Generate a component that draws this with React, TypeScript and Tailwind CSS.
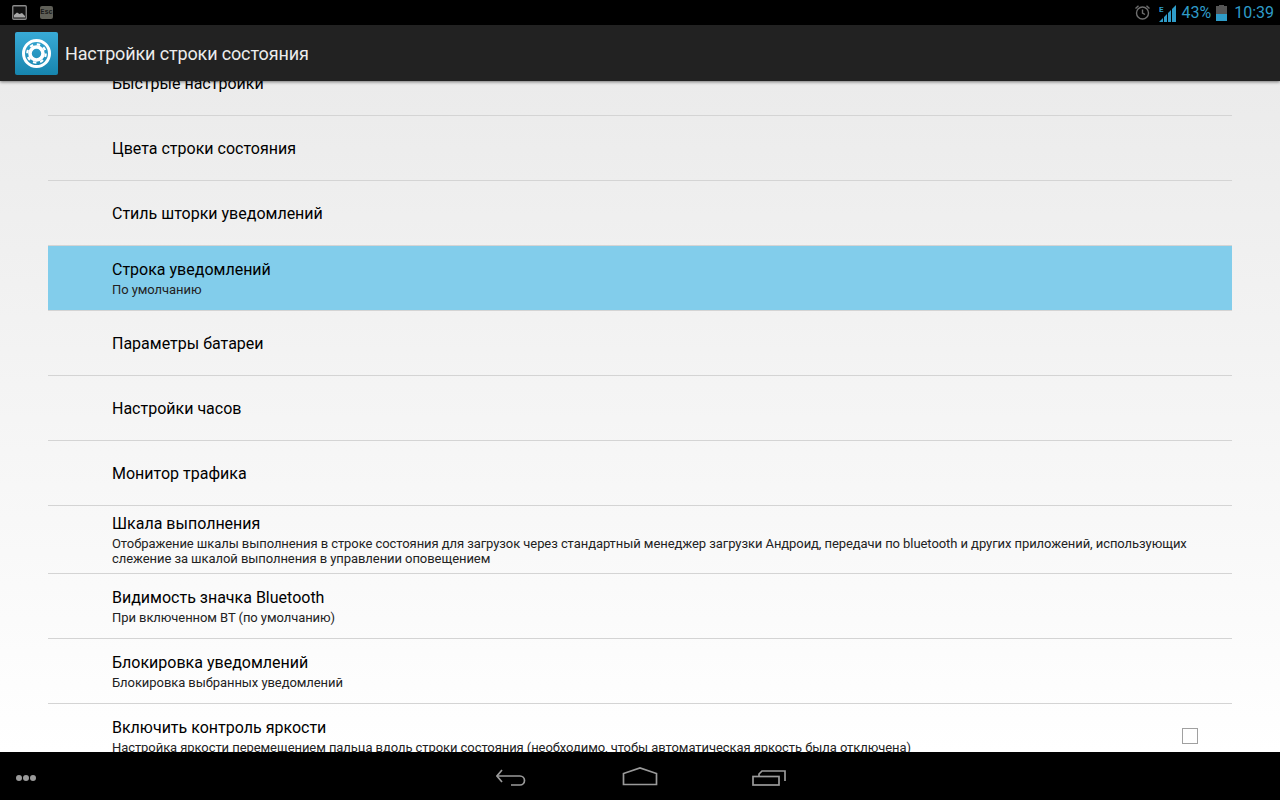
import React from "react";

type Row = {
  title: string;
  desc?: React.ReactNode;
  active?: boolean;
  checkbox?: boolean;
};

const rows: Row[] = [
  { title: "Быстрые настройки" },
  { title: "Цвета строки состояния" },
  { title: "Стиль шторки уведомлений" },
  { title: "Строка уведомлений", desc: "По умолчанию", active: true },
  { title: "Параметры батареи" },
  { title: "Настройки часов" },
  { title: "Монитор трафика" },
  {
    title: "Шкала выполнения",
    desc: "Отображение шкалы выполнения в строке состояния для загрузок через стандартный менеджер загрузки Андроид, передачи по bluetooth и других приложений, использующих слежение за шкалой выполнения в управлении оповещением",
  },
  { title: "Видимость значка Bluetooth", desc: "При включенном ВТ (по умолчанию)" },
  { title: "Блокировка уведомлений", desc: "Блокировка выбранных уведомлений" },
  {
    title: "Включить контроль яркости",
    desc: "Настройка яркости перемещением пальца вдоль строки состояния (необходимо, чтобы автоматическая яркость была отключена)",
    checkbox: true,
  },
];

const GearLogo = () => (
  <div className="w-[43px] h-[43px] rounded-[2px] bg-gradient-to-b from-[#38aad6] to-[#1685ae] flex items-center justify-center">
    <svg width="31" height="31" viewBox="0 0 31 31" fill="none">
      <circle cx="15.5" cy="15.5" r="13" stroke="white" strokeWidth="3" />
      <circle cx="15.5" cy="15.5" r="6.5" stroke="white" strokeWidth="3.6" />
      <circle cx="15.5" cy="15.5" r="9.2" stroke="white" strokeWidth="2.2" strokeDasharray="3.4 3.83" />
    </svg>
  </div>
);

const StatusBar = () => (
  <div className="h-[25px] bg-black flex items-center justify-between shrink-0">
    <div className="flex items-center gap-[13px] pl-[12px]">
      <svg width="15" height="15" viewBox="0 0 15 15" fill="none">
        <rect x="0.75" y="0.75" width="13.5" height="13.5" rx="1" fill="#111" stroke="#8b8b8b" strokeWidth="1.3" />
        <path d="M2 12.5 L2 10 L5 7.5 L7.5 9 L10 8 L13 11 L13 12.5 Z" fill="#a8a8a8" />
      </svg>
      <div className="w-[13px] h-[13px] rounded-[2px] bg-[#5f5f57] flex items-center justify-center text-[7px] font-bold leading-none text-[#1a1a1a] font-['Liberation_Mono',monospace]">
        Esc
      </div>
    </div>
    <div className="flex items-center pr-[6px] text-[#2f9cc8] font-['Roboto',sans-serif] text-[16px] leading-none">
      <svg width="17" height="17" viewBox="0 0 17 17" fill="none" stroke="#6f6f6f" strokeWidth="1.4" className="mr-[8px]">
        <circle cx="8.5" cy="9" r="6" />
        <path d="M8.5 5.5 V9 L11 10.5" />
        <path d="M1.5 4.5 L4.5 1.8 M15.5 4.5 L12.5 1.8" />
      </svg>
      <svg width="17" height="18" viewBox="0 0 17 18" className="mr-[5px]">
        <path d="M0 18 L4 14 V18 Z M5 18 V13 L8 10 V18 Z M9 18 V9 L12 6 V18 Z M13 18 V5 L17 1 V18 Z" fill="#2f9cc8" />
        <text x="0" y="8" fontSize="8" fontWeight="700" fill="#2f9cc8" fontFamily="Roboto, sans-serif">E</text>
      </svg>
      <span>43%</span>
      <div className="w-[11px] h-[16px] mx-[5px] flex flex-col items-center">
        <div className="w-[5px] h-[1px] bg-[#555]" />
        <div className="w-full flex-1 bg-[#555] flex flex-col justify-end">
          <div className="h-[7px] bg-[#2f9cc8]" />
        </div>
      </div>
      <span className="ml-[2px]">10:39</span>
    </div>
  </div>
);

const ActionBar = () => (
  <div className="h-[56px] bg-[#222222] flex items-center pl-[15px] shrink-0 relative z-10 shadow-[0_1px_3px_rgba(0,0,0,0.5)]">
    <GearLogo />
    <span className="ml-[7px] text-[18px] tracking-[-0.14px] text-[#ececec]">Настройки строки состояния</span>
  </div>
);

const SettingRow = ({ row }: { row: Row }) => (
  <div
    className={`border-b border-[#d4d4d4] pl-[64px] pr-[34px] flex items-center justify-between min-h-[65px] ${
      row.desc ? "pt-[6px] pb-[7px]" : "pt-[2px]"
    } ${row.active ? "bg-[#82cdeb]" : ""}`}
  >
    <div className="flex-1 min-w-0">
      <div className={`text-[16px] text-black ${row.desc ? "leading-[24px]" : "leading-[22px]"}`}>{row.title}</div>
      {row.desc && (
        <div className="text-[13px] tracking-[-0.07px] leading-[15px] text-[#222]">{row.desc}</div>
      )}
    </div>
    {row.checkbox && (
      <div className="w-[16px] h-[16px] border border-[#a0a0a0] mt-[1px] ml-[16px] shrink-0" />
    )}
  </div>
);

const NavBar = () => (
  <div className="h-[48px] bg-black flex items-center relative shrink-0">
    <div className="flex gap-[1px] pl-[16px] mt-[4px]">
      <div className="w-[6px] h-[6px] rounded-full bg-[#9a9a9a]" />
      <div className="w-[6px] h-[6px] rounded-full bg-[#9a9a9a]" />
      <div className="w-[6px] h-[6px] rounded-full bg-[#9a9a9a]" />
    </div>
    <div className="absolute left-[496px] top-[16px]">
      <svg width="33" height="20" viewBox="0 0 33 20" fill="none" stroke="#9a9a9a" strokeWidth="1.7">
        <path d="M6 2 L1 8 L6 14" />
        <path d="M1 8 H24 A4.5 4.5 0 0 1 24 17 H15" />
      </svg>
    </div>
    <div className="absolute left-[622px] top-[15px]">
      <svg width="36" height="19" viewBox="0 0 36 19" fill="none" stroke="#9a9a9a" strokeWidth="1.7">
        <path d="M1.5 17.5 V6.5 L18 1 L34.5 6.5 V17.5 Z" />
      </svg>
    </div>
    <div className="absolute left-[752px] top-[18px]">
      <svg width="34" height="16" viewBox="0 0 34 16" fill="none" stroke="#9a9a9a" strokeWidth="1.7">
        <rect x="1" y="6.5" width="26" height="8.5" />
        <path d="M7 6 V4 L10 1 H33 V11" />
      </svg>
    </div>
  </div>
);

export default function App() {
  return (
    <div className="w-[1280px] h-[800px] flex flex-col overflow-hidden font-['Roboto',sans-serif]">
      <StatusBar />
      <ActionBar />
      <div className="flex-1 min-h-0 overflow-hidden bg-gradient-to-b from-[#ebebeb] to-white px-[48px]">
        <div className="-mt-[30px]">
          {rows.map((row) => (
            <SettingRow key={row.title} row={row} />
          ))}
        </div>
      </div>
      <NavBar />
    </div>
  );
}
